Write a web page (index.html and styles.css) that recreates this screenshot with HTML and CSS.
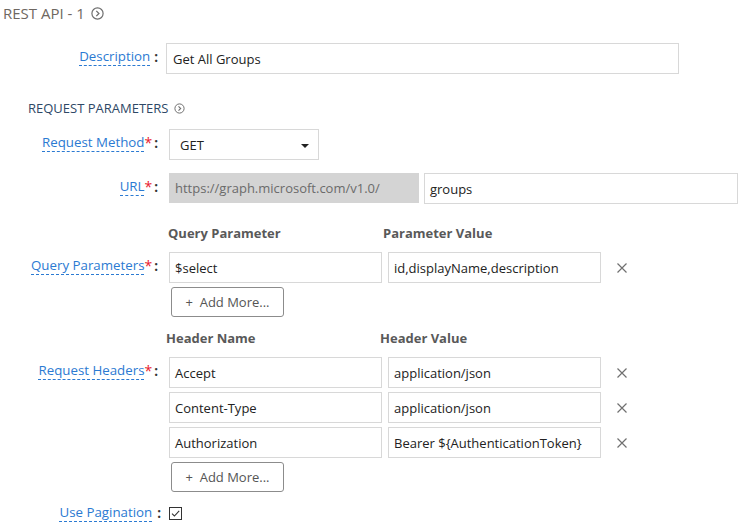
FILE: index.html
```html
<!DOCTYPE html>
<html>
<head>
<meta charset="utf-8">
<link rel="stylesheet" href="styles.css">
</head>
<body>
<div class="page">
  <div class="title">REST API - 1
    <svg class="circ-icon" width="13" height="13" viewBox="0 0 13 13"><circle cx="6.5" cy="6.5" r="5.6" fill="none" stroke="#6f6f6f" stroke-width="1.2"/><path d="M5.3 3.9 L7.9 6.5 L5.3 9.1" fill="none" stroke="#6f6f6f" stroke-width="1.3"/></svg>
  </div>

  <div class="row row-desc">
    <div class="label"><span class="lbl">Description</span><span class="colon">:</span></div>
    <div class="input desc-input">Get All Groups</div>
  </div>

  <div class="section">REQUEST PARAMETERS
    <svg class="circ-icon small" width="11" height="11" viewBox="0 0 11 11"><circle cx="5.5" cy="5.5" r="4.6" fill="none" stroke="#6f6f6f" stroke-width="1"/><path d="M4.5 3.3 L6.7 5.5 L4.5 7.7" fill="none" stroke="#6f6f6f" stroke-width="1.1"/></svg>
  </div>

  <div class="row row-method">
    <div class="label"><span class="lbl">Request Method</span><span class="req">*</span><span class="colon">:</span></div>
    <div class="fields">
      <div class="input select">GET<span class="caret"></span></div>
    </div>
  </div>

  <div class="row row-url">
    <div class="label"><span class="lbl">URL</span><span class="req">*</span><span class="colon">:</span></div>
    <div class="fields url-fields">
      <div class="input base-url">https://graph.microsoft.com/v1.0/</div>
      <div class="input path-input">groups</div>
    </div>
  </div>

  <div class="heads heads-q">
    <div class="head">Query Parameter</div>
    <div class="head">Parameter Value</div>
  </div>
  <div class="row row-kv">
    <div class="label"><span class="lbl">Query Parameters</span><span class="req">*</span><span class="colon">:</span></div>
    <div class="fields kv-fields">
      <div class="kv">
        <div class="input kv-input">$select</div>
        <div class="input kv-input">id,displayName,description</div>
        <svg class="remove" width="10" height="10" viewBox="0 0 10 10"><path d="M0.5 0.5 L9.5 9.5 M9.5 0.5 L0.5 9.5" stroke="#707070" stroke-width="1.2"/></svg>
      </div>
    </div>
  </div>
  <div class="add-wrap"><div class="add-btn">+&nbsp; Add More...</div></div>

  <div class="heads heads-h">
    <div class="head">Header Name</div>
    <div class="head">Header Value</div>
  </div>
  <div class="row row-kv">
    <div class="label"><span class="lbl">Request Headers</span><span class="req">*</span><span class="colon">:</span></div>
    <div class="fields kv-fields">
      <div class="kv">
        <div class="input kv-input">Accept</div>
        <div class="input kv-input">application/json</div>
        <svg class="remove" width="10" height="10" viewBox="0 0 10 10"><path d="M0.5 0.5 L9.5 9.5 M9.5 0.5 L0.5 9.5" stroke="#707070" stroke-width="1.2"/></svg>
      </div>
    </div>
  </div>
  <div class="row-plain">
    <div class="kv">
      <div class="input kv-input">Content-Type</div>
      <div class="input kv-input">application/json</div>
      <svg class="remove" width="10" height="10" viewBox="0 0 10 10"><path d="M0.5 0.5 L9.5 9.5 M9.5 0.5 L0.5 9.5" stroke="#707070" stroke-width="1.2"/></svg>
    </div>
  </div>
  <div class="row-plain">
    <div class="kv">
      <div class="input kv-input">Authorization</div>
      <div class="input kv-input">Bearer ${AuthenticationToken}</div>
      <svg class="remove" width="10" height="10" viewBox="0 0 10 10"><path d="M0.5 0.5 L9.5 9.5 M9.5 0.5 L0.5 9.5" stroke="#707070" stroke-width="1.2"/></svg>
    </div>
  </div>
  <div class="add-wrap add-wrap2"><div class="add-btn">+&nbsp; Add More...</div></div>

  <div class="row row-check">
    <div class="label"><span class="lbl">Use Pagination</span><span class="colon">:</span></div>
    <div class="fields">
      <span class="checkbox"><svg width="13" height="13" viewBox="0 0 13 13"><rect x="0.5" y="0.5" width="12" height="12" fill="#fff" stroke="#333" stroke-width="1"/><path d="M3 6.6 L5.4 9 L10.2 3.8" fill="none" stroke="#333" stroke-width="1.1"/></svg></span>
    </div>
  </div>
</div>
</body>
</html>
```

FILE: styles.css
```css
html, body {
  margin: 0;
  padding: 0;
  background: #ffffff;
}
body {
  font-family: "Open Sans", "Noto Sans", sans-serif;
  font-size: 13px;
  color: #222;
}
.page {
  width: 742px;
  height: 530px;
  overflow: hidden;
}
.title {
  height: 26px;
  line-height: 26px;
  padding-left: 3px;
  font-size: 15px;
  color: #6e6761;
  display: flex;
  align-items: center;
  gap: 6px;
}
.circ-icon { display: block; }
.section {
  margin-top: 24px;
  height: 20px;
  line-height: 20px;
  padding-left: 28px;
  font-size: 13px;
  color: #2e4866;
  display: flex;
  align-items: center;
  gap: 6px;
}
.row {
  display: flex;
  align-items: center;
}
.label {
  width: 158px;
  flex: none;
  text-align: right;
  display: flex;
  justify-content: flex-end;
  align-items: center;
  line-height: 18px;
  margin-top: -4px;
  font-size: 13.3px;
}
.lbl {
  color: #2b7ad2;
  border-bottom: 1px dashed #2b7ad2;
  line-height: 17px;
}
.req {
  color: #e8192c;
  align-self: flex-start;
  font-size: 14px;
}
.colon {
  color: #333;
  font-weight: bold;
  margin-left: 4px;
  align-self: flex-start;
}
.req + .colon { margin-left: 2px; }
.fields {
  margin-left: 11px;
  display: flex;
}
.input {
  box-sizing: border-box;
  height: 31px;
  border: 1px solid #d8d8d8;
  background: #fff;
  display: flex;
  align-items: center;
  padding: 0 5px;
  color: #222;
  white-space: nowrap;
}
.row-desc { margin-top: 17px; }
.desc-input {
  margin-left: 8px;
  width: 513px;
  padding-left: 6px;
}
.row-method { margin-top: 11px; }
.select {
  width: 150px;
  padding-left: 10px;
  position: relative;
}
.caret {
  position: absolute;
  right: 9px;
  top: 14px;
  width: 0;
  height: 0;
  border-left: 4.5px solid transparent;
  border-right: 4.5px solid transparent;
  border-top: 4.5px solid #222;
}
.row-url { margin-top: 13px; }
.url-fields { gap: 5px; }
.base-url {
  width: 250px;
  background: #d4d4d4;
  border-color: #d4d4d4;
  color: #6b6b6b;
  height: 30px;
}
.path-input {
  width: 314px;
  height: 31px;
}
.heads {
  display: flex;
  padding-left: 168px;
  height: 18px;
  line-height: 18px;
}
.heads-q { margin-top: 20px; }
.heads-h { margin-top: 12px; padding-left: 166px; }
.head {
  width: 215px;
  font-weight: bold;
  color: #595959;
}
.heads-h .head { width: 214px; }
.row-kv { margin-top: 10px; }
.kv {
  display: flex;
  align-items: center;
  gap: 6px;
}
.kv-input { width: 213px; }
.remove {
  display: block;
  margin-left: 10px;
}
.row-plain {
  margin-top: 4px;
  padding-left: 169px;
}
.add-wrap {
  margin-top: 4px;
  padding-left: 171px;
}
.add-wrap2 { margin-top: 4px; }
.add-btn {
  box-sizing: border-box;
  width: 113px;
  height: 30px;
  border: 1px solid #8c8c8c;
  border-radius: 3px;
  display: flex;
  align-items: center;
  justify-content: center;
  color: #555;
}
.row-check { margin-top: 12px; }
.row-check .label { margin-top: 0; width: 161px; }
.row-check .fields { margin-left: 8px; }
.row-check .colon { margin-left: 5px; }
.checkbox { display: block; height: 13px; }
.checkbox svg { display: block; }
```
